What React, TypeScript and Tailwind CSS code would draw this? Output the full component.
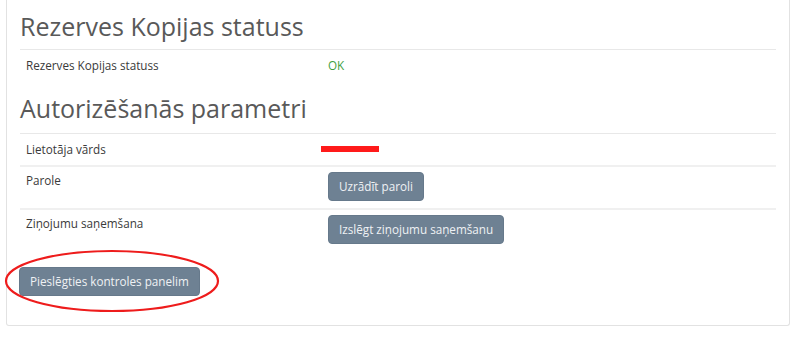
import React from "react";

const Btn = ({ children }: { children: React.ReactNode }) => (
  <button className="h-[29px] px-[10px] rounded-[4px] bg-[#6e8193] text-[#eef1f4] text-[11.7px] leading-[17px] border border-[#66798b]">
    {children}
  </button>
);

export default function App() {
  return (
    <div className="w-[800px] h-[346px] bg-white relative font-['Open_Sans',_'DejaVu_Sans',_sans-serif] text-[#3a3a3a]">
      <div className="ml-[6px] w-[784px] h-[326px] border border-t-0 border-[#e2e2e2] rounded-b-[3px] px-[13px]">
        <h2 className="text-[25px] leading-[30px] pt-[11px] pb-[8px] text-[#595959]">Rezerves Kopijas statuss</h2>
        <div className="border-t border-[#e8e8e8] grid grid-cols-[302px_1fr] px-[6px] py-[7px] text-[11.7px] leading-[17px]">
          <div>Rezerves Kopijas statuss</div>
          <div className="text-[#3f9f3f]">OK</div>
        </div>
        <h2 className="text-[25px] leading-[30px] pt-[12px] pb-[10px] text-[#595959]">Autorizēšanās parametri</h2>
        <div className="border-t border-[#e8e8e8] grid grid-cols-[302px_1fr] px-[6px] py-[7px] text-[11.7px] leading-[17px]">
          <div>Lietotāja vārds</div>
          <div className="flex items-start">
            <div className="-ml-[7px] mt-[5px] w-[58px] h-[6px] bg-[#ff1a1a]"></div>
          </div>
        </div>
        <div className="border-t-2 border-[#f0f0f0] grid grid-cols-[302px_1fr] px-[6px] pt-[5px] pb-[7px] text-[11.7px] leading-[17px]">
          <div>Parole</div>
          <div>
            <Btn>Uzrādīt paroli</Btn>
          </div>
        </div>
        <div className="border-t-2 border-[#f0f0f0] grid grid-cols-[302px_1fr] px-[6px] pt-[5px] pb-[7px] text-[11.7px] leading-[17px]">
          <div>Ziņojumu saņemšana</div>
          <div>
            <Btn>Izslēgt ziņojumu saņemšanu</Btn>
          </div>
        </div>
        <div className="mt-[16px] -ml-[1px]">
          <Btn>Pieslēgties kontroles panelim</Btn>
        </div>
      </div>
      <svg className="absolute left-[4px] top-[249px]" width="216" height="64" viewBox="0 0 216 64">
        <ellipse cx="108" cy="32" rx="106" ry="30" fill="none" stroke="#ee1c1c" strokeWidth="2.2" />
      </svg>
    </div>
  );
}
